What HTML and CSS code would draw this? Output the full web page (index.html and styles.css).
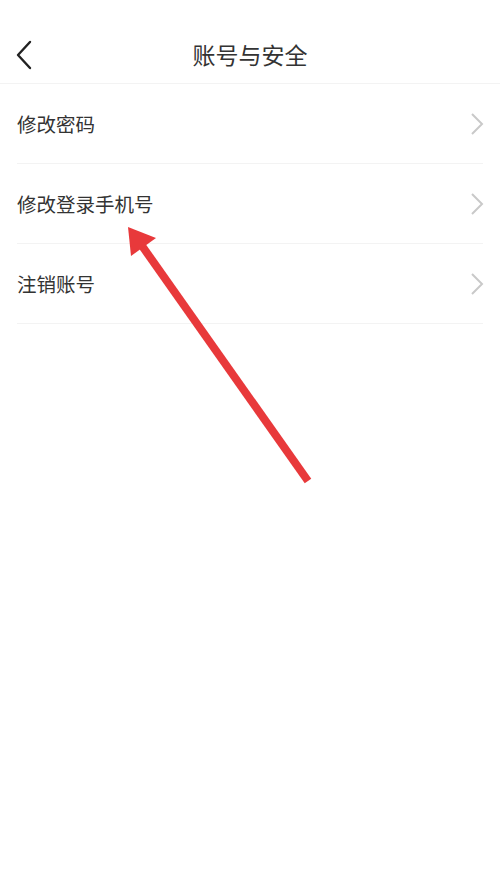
FILE: index.html
```html
<!DOCTYPE html>
<html lang="zh-CN">
<head>
    <meta charset="UTF-8">
    <meta name="viewport" content="width=device-width, initial-scale=1.0">
    <title>账号与安全</title>
    <link rel="stylesheet" href="styles.css">
</head>
<body>
    <div class="page">
        <div class="header">
            <button class="back">
                <svg width="18" height="30" viewBox="0 0 18 30">
                    <polyline points="15,2 3,15 15,28" fill="none" stroke="#222" stroke-width="2.4" stroke-linecap="round" stroke-linejoin="round"/>
                </svg>
            </button>
            <h1 class="title">账号与安全</h1>
        </div>

        <div class="list">
            <div class="row">
                <span>修改密码</span>
                <svg class="arrow" width="16" height="24" viewBox="0 0 16 24">
                    <polyline points="3,2 13,12 3,22" fill="none" stroke="#c9c9c9" stroke-width="2"/>
                </svg>
            </div>
            <div class="row">
                <span>修改登录手机号</span>
                <svg class="arrow" width="16" height="24" viewBox="0 0 16 24">
                    <polyline points="3,2 13,12 3,22" fill="none" stroke="#c9c9c9" stroke-width="2"/>
                </svg>
            </div>
            <div class="row">
                <span>注销账号</span>
                <svg class="arrow" width="16" height="24" viewBox="0 0 16 24">
                    <polyline points="3,2 13,12 3,22" fill="none" stroke="#c9c9c9" stroke-width="2"/>
                </svg>
            </div>
        </div>

        <!-- red pointer drawn over the list -->
        <svg class="pointer" width="500" height="500" viewBox="0 0 500 500">
            <line x1="308" y1="481" x2="140" y2="243" stroke="#e8393b" stroke-width="8"/>
            <polygon points="128,227 156,238 131,256" fill="#e8393b"/>
        </svg>
    </div>
</body>
</html>
```

FILE: styles.css
```css
* {
    box-sizing: border-box;
}
body {
    margin: 0;
    background: #fff;
    font-family: "Noto Sans CJK SC", "Noto Sans", sans-serif;
    color: #333;
}
.page {
    position: relative;
    width: 500px;
    height: 889px;
    overflow: hidden;
}
.header {
    height: 84px;
    padding-top: 26px;
    display: flex;
    align-items: center;
    justify-content: center;
    position: relative;
    border-bottom: 1px solid #f3f3f3;
}
.back {
    position: absolute;
    left: 15px;
    top: 40px;
    padding: 0;
    background: none;
    border: none;
    line-height: 0;
}
.title {
    margin: 0;
    font-size: 23px;
    font-weight: normal;
    color: #333;
    line-height: 1;
}
.list {
    padding: 0 17px;
}
.row {
    height: 80px;
    display: flex;
    justify-content: space-between;
    align-items: center;
    border-bottom: 1px solid #f3f3f3;
    font-size: 19.5px;
    color: #333;
}
.arrow {
    margin-right: -2px;
}
.pointer {
    position: absolute;
    left: 0;
    top: 0;
    pointer-events: none;
}
```
